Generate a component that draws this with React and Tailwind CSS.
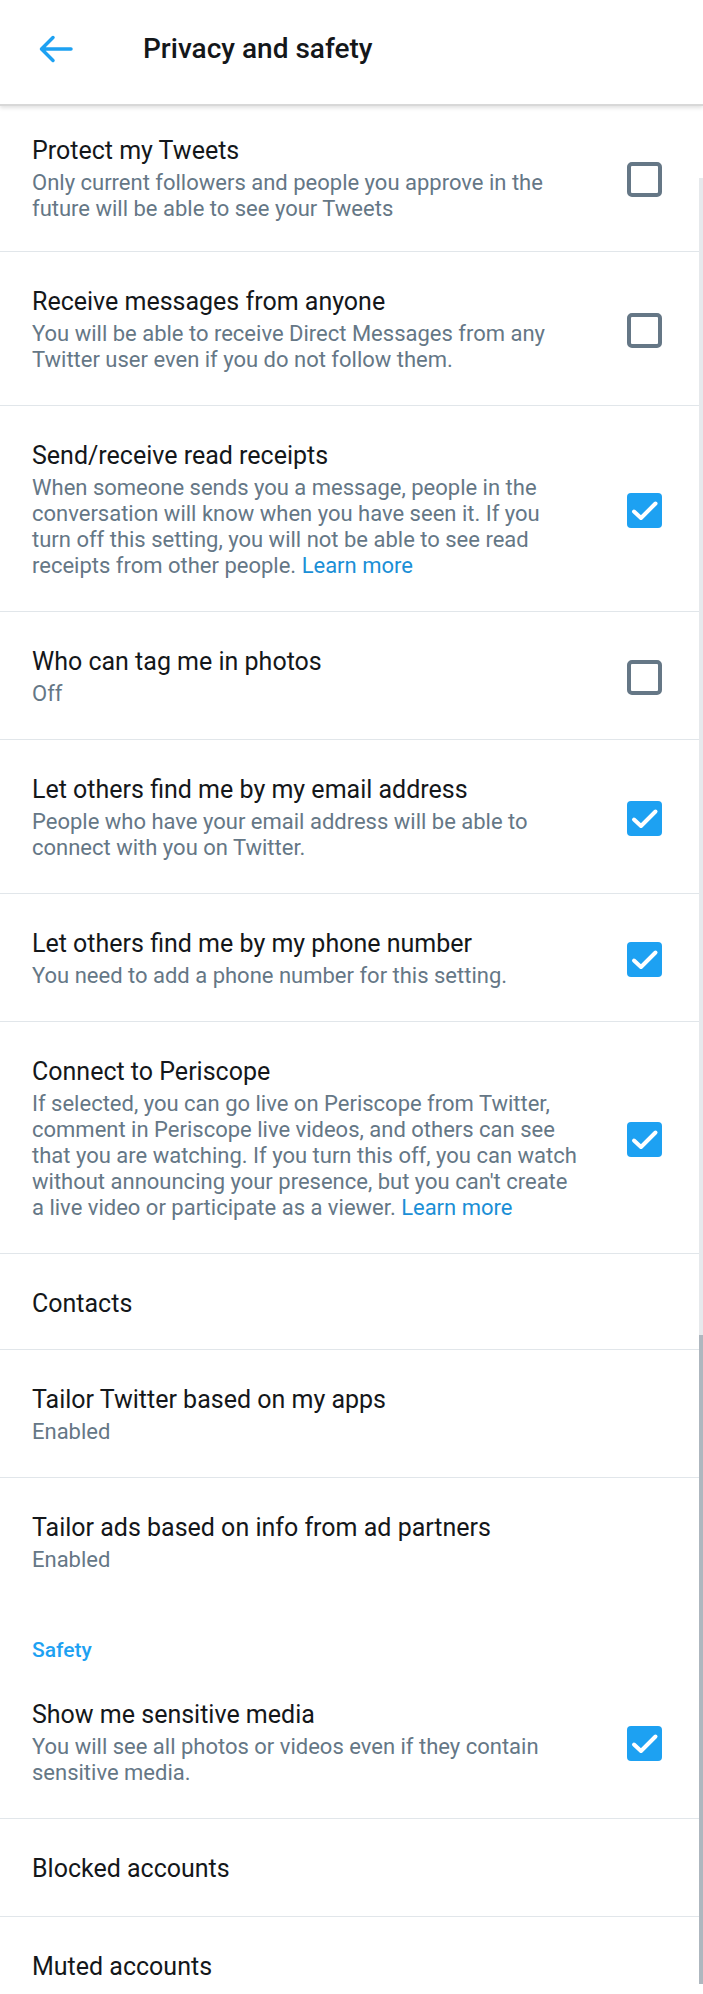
import React from "react";

const LINK = "text-[#1b8fd6]";

const rows = [
  {
    title: "Protect my Tweets",
    desc: ["Only current followers and people you approve in the", "future will be able to see your Tweets"],
    check: false,
    first: true,
  },
  {
    title: "Receive messages from anyone",
    desc: ["You will be able to receive Direct Messages from any", "Twitter user even if you do not follow them."],
    check: false,
  },
  {
    title: "Send/receive read receipts",
    desc: [
      "When someone sends you a message, people in the",
      "conversation will know when you have seen it. If you",
      "turn off this setting, you will not be able to see read",
      <>
        receipts from other people. <span className={LINK}>Learn more</span>
      </>,
    ],
    check: true,
  },
  { title: "Who can tag me in photos", desc: ["Off"], check: false },
  {
    title: "Let others find me by my email address",
    desc: ["People who have your email address will be able to", "connect with you on Twitter."],
    check: true,
  },
  {
    title: "Let others find me by my phone number",
    desc: ["You need to add a phone number for this setting."],
    check: true,
  },
  {
    title: "Connect to Periscope",
    desc: [
      "If selected, you can go live on Periscope from Twitter,",
      "comment in Periscope live videos, and others can see",
      "that you are watching. If you turn this off, you can watch",
      "without announcing your presence, but you can't create",
      <>
        a live video or participate as a viewer. <span className={LINK}>Learn more</span>
      </>,
    ],
    check: true,
  },
  { title: "Contacts", tight: true },
  { title: "Tailor Twitter based on my apps", desc: ["Enabled"] },
  { title: "Tailor ads based on info from ad partners", desc: ["Enabled"], noBorder: true },
];

const safetyRows = [
  {
    title: "Show me sensitive media",
    desc: ["You will see all photos or videos even if they contain", "sensitive media."],
    check: true,
  },
  { title: "Blocked accounts" },
  { title: "Muted accounts", noBorder: true },
];

function Checkbox({ checked }) {
  if (checked) {
    return (
      <svg width="35" height="35" viewBox="0 0 35 35" className="shrink-0">
        <rect x="0" y="0" width="35" height="35" rx="4" fill="#1da1f2" />
        <path d="M7 18.5 L14 25 L28.5 10.5" fill="none" stroke="#ffffff" strokeWidth="4" strokeLinecap="round" strokeLinejoin="round" />
      </svg>
    );
  }
  return <div className="w-[35px] h-[35px] shrink-0 rounded-[5px] border-[4px] border-[#657786] bg-white" />;
}

function Row({ row }) {
  const pad = row.first ? "pt-[30px] pb-[29px]" : row.tight ? "pt-[35px] pb-[30px]" : "pt-[35px] pb-[32px]";
  return (
    <div className={`flex items-center pl-[32px] pr-[41px] ${pad} ${row.noBorder ? "" : "border-b border-[#e1e6ea]"}`}>
      <div className="flex-1 min-w-0">
        <div className="text-[25px] leading-[30px] text-[#14171a] whitespace-nowrap">{row.title}</div>
        {row.desc && (
          <div className="mt-[4px] text-[22px] leading-[26px] text-[#657786]">
            {row.desc.map((line, i) => (
              <div key={i} className="whitespace-nowrap">
                {line}
              </div>
            ))}
          </div>
        )}
      </div>
      {row.check !== undefined && <Checkbox checked={row.check} />}
    </div>
  );
}

export default function App() {
  return (
    <div className="relative w-full h-[1994px] overflow-hidden bg-white font-['Roboto','Liberation_Sans',sans-serif]">
      <header className="relative z-10 flex items-center h-[106px] pb-[6px] pl-[39px] bg-white border-b-2 border-[#d8d8d8] shadow-[0_2px_4px_rgba(0,0,0,0.12)]">
        <svg width="34" height="28" viewBox="0 0 34 28" className="shrink-0">
          <path d="M32 14 H3 M14 2.5 L2.5 14 L14 25.5" fill="none" stroke="#1da1f2" strokeWidth="3.5" strokeLinecap="round" strokeLinejoin="round" />
        </svg>
        <h1 className="ml-[70px] text-[28px] leading-[34px] font-medium text-[#14171a]">Privacy and safety</h1>
      </header>

      <main>
        {rows.map((r, i) => (
          <Row key={i} row={r} />
        ))}
        <div className="pl-[32px] pt-[32px] pb-[2px] text-[21px] leading-[26px] font-medium text-[#1da1f2]">Safety</div>
        {safetyRows.map((r, i) => (
          <Row key={i} row={r} />
        ))}
      </main>

      <div className="absolute right-0 top-[178px] w-[4px] h-[1806px] bg-[#e6e9ec]" />
      <div className="absolute right-0 top-[1335px] w-[4px] h-[649px] bg-[#aeb7bf]" />
    </div>
  );
}
